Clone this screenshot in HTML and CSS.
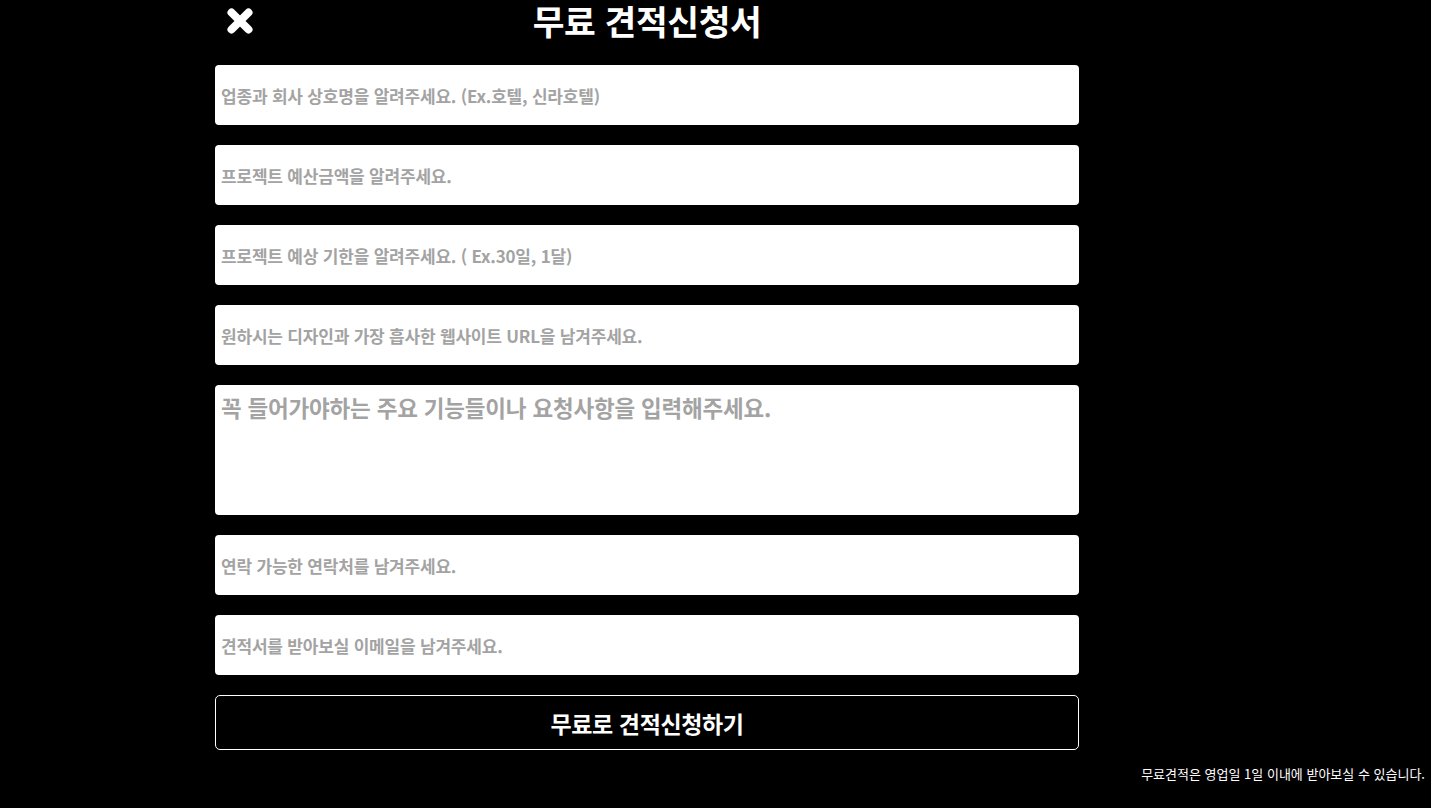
FILE: index.html
```html
<!DOCTYPE html>
<html lang="ko">
<head>
<meta charset="utf-8">
<link rel="stylesheet" href="styles.css">
</head>
<body>
<div class="page">
  <form class="form">
    <div class="header">
      <button type="button" class="close" aria-label="close">
        <svg width="30" height="30" viewBox="0 0 30 30"><path d="M6.5 6.5 L23.5 23.5 M23.5 6.5 L6.5 23.5" stroke="#fff" stroke-width="8" stroke-linecap="round"/></svg>
      </button>
      <h1 class="title">무료 견적신청서</h1>
    </div>
    <input class="field" placeholder="업종과 회사 상호명을 알려주세요. (Ex.호텔, 신라호텔)">
    <input class="field" placeholder="프로젝트 예산금액을 알려주세요.">
    <input class="field" placeholder="프로젝트 예상 기한을 알려주세요. ( Ex.30일, 1달)">
    <input class="field" placeholder="원하시는 디자인과 가장 흡사한 웹사이트 URL을 남겨주세요.">
    <textarea class="field area" placeholder="꼭 들어가야하는 주요 기능들이나 요청사항을 입력해주세요."></textarea>
    <input class="field" placeholder="연락 가능한 연락처를 남겨주세요.">
    <input class="field" placeholder="견적서를 받아보실 이메일을 남겨주세요.">
    <button type="button" class="submit">무료로 견적신청하기</button>
  </form>
  <p class="note">무료견적은 영업일 1일 이내에 받아보실 수 있습니다.</p>
</div>
</body>
</html>
```
FILE: styles.css
```css
html, body {
  margin: 0;
  padding: 0;
  background: #000;
  height: 100%;
}
body {
  font-family: "Noto Sans CJK KR", "Noto Sans", sans-serif;
  color: #fff;
}
.page {
  display: flex;
  flex-direction: column;
}
.form {
  width: 864px;
  margin-left: 215px;
  display: flex;
  flex-direction: column;
  gap: 20px;
}
.header {
  height: 45px;
  display: flex;
  align-items: flex-start;
  justify-content: center;
  position: relative;
}
.close {
  position: absolute;
  left: 10px;
  top: 6px;
  background: none;
  border: 0;
  padding: 0;
  width: 30px;
  height: 30px;
  cursor: pointer;
}
.close svg { display: block; }
.title {
  margin: 0;
  font-size: 34.5px;
  font-weight: 700;
  line-height: 40px;
  color: #fff;
  letter-spacing: -0.4px;
}
.field {
  box-sizing: border-box;
  height: 60px;
  width: 100%;
  border: 0;
  border-radius: 4px;
  background: #fff;
  padding: 0 6px;
  font-family: inherit;
  font-size: 17px;
  font-weight: 600;
  color: #333;
  outline: none;
}
.field::placeholder {
  color: #a3a3a3;
  letter-spacing: -0.2px;
}
.area {
  height: 130px;
  resize: none;
  padding: 6px 6px;
  font-size: 22.5px;
  line-height: 32px;
  display: block;
}
.submit {
  height: 55px;
  border: 1px solid #fff;
  border-radius: 5px;
  background: #000;
  color: #fff;
  font-family: inherit;
  font-size: 23px;
  font-weight: 700;
  letter-spacing: -0.4px;
  cursor: pointer;
}
.note {
  margin: 14px 6px 0 0;
  text-align: right;
  font-size: 13px;
  line-height: 20px;
  color: #fff;
}
```
